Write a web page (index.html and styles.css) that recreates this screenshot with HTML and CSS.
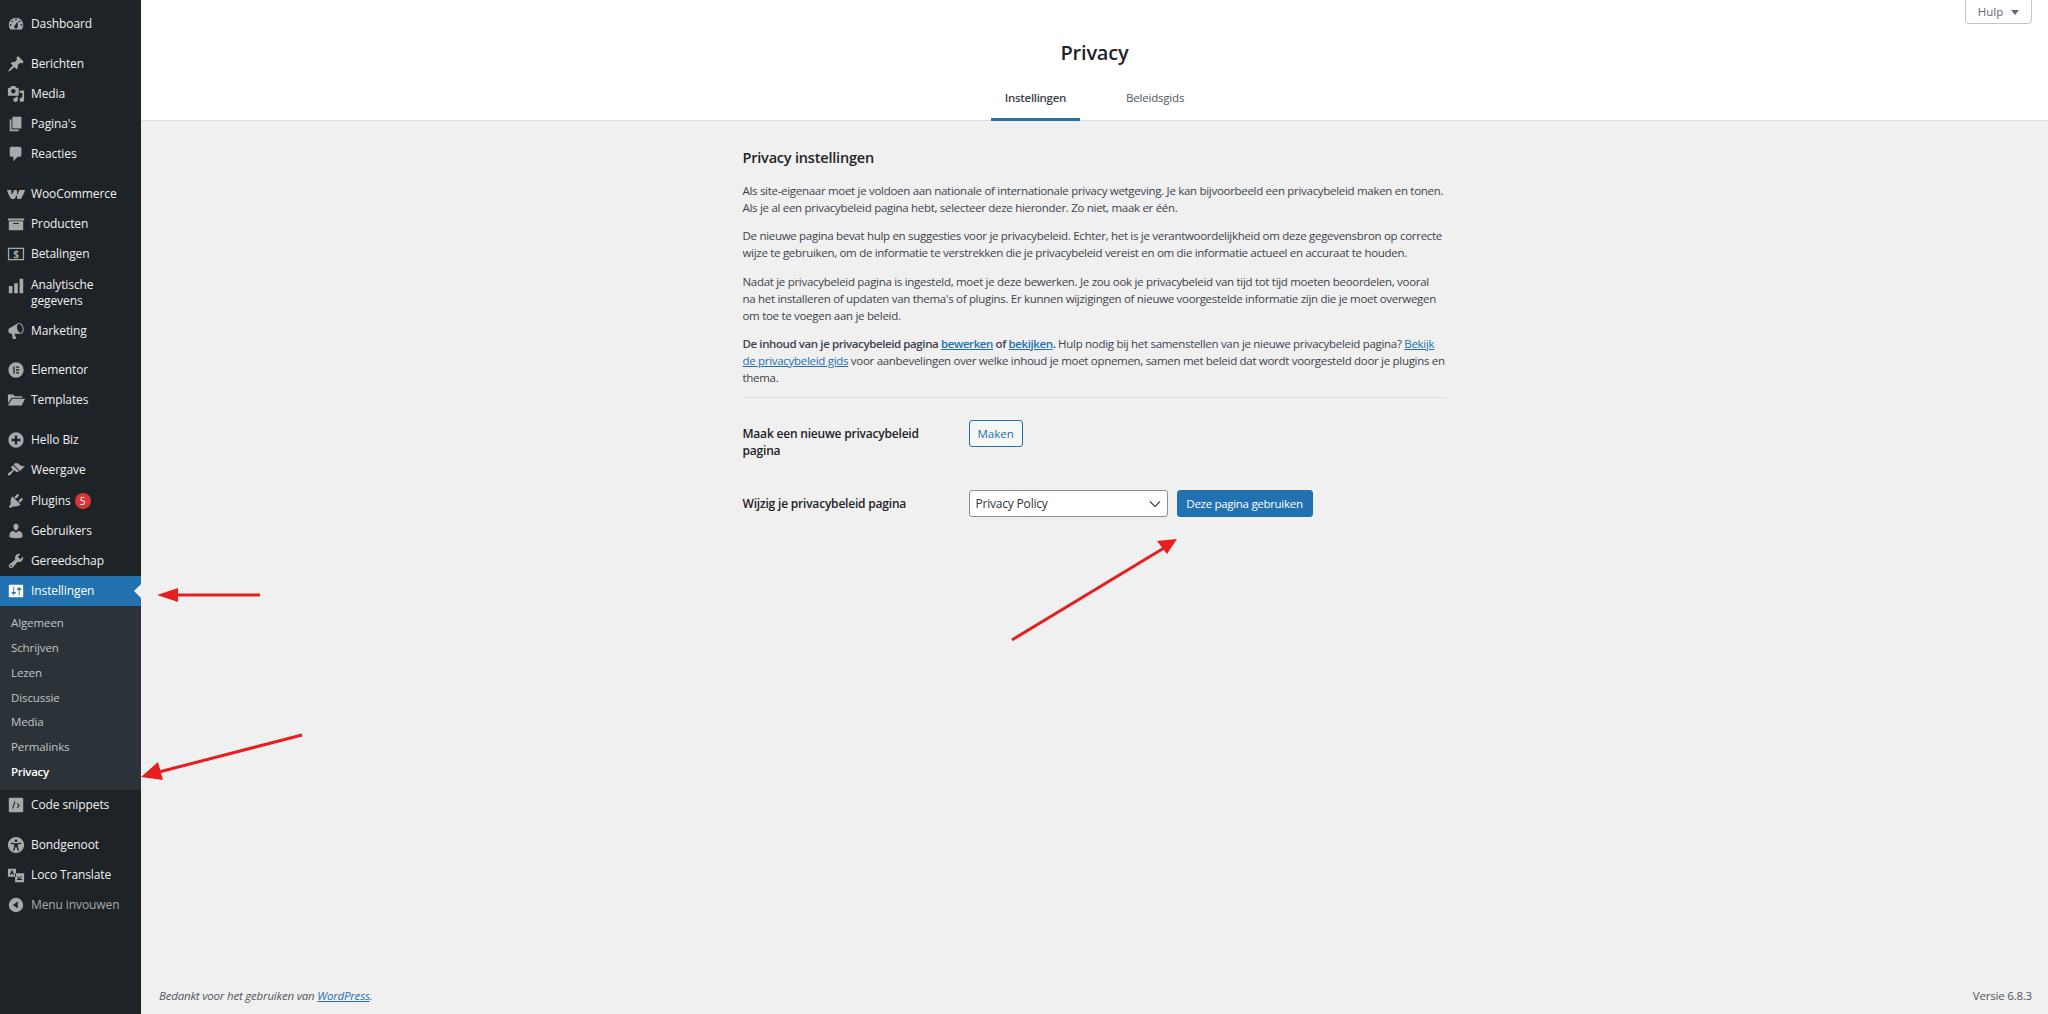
FILE: index.html
```html
<!DOCTYPE html>
<html lang="nl">

<head>
    <meta charset="UTF-8">
    <meta name="viewport" content="width=device-width, initial-scale=1.0">
    <title>Privacy instellingen</title>

    <!-- Custom style. -->
    <link rel="stylesheet" href="styles.css">
</head>

<body>
    <div class="page">
        <nav class="sidebar">
            <ul class="menu">
                <li class="item">
                    <svg class="icon" viewBox="0 0 20 20"><path d="M3.76 16h12.48c1.1-1.37 1.76-3.11 1.76-5 0-4.42-3.58-8-8-8s-8 3.58-8 8c0 1.89.66 3.63 1.76 5zM10 4c.55 0 1 .45 1 1s-.45 1-1 1-1-.45-1-1 .45-1 1-1zM6 6c.55 0 1 .45 1 1s-.45 1-1 1-1-.45-1-1 .45-1 1-1zm8 0c.55 0 1 .45 1 1s-.45 1-1 1-1-.45-1-1 .45-1 1-1zm-5.37 5.55L12 7v6c0 1.1-.9 2-2 2s-2-.9-2-2c0-.57.24-1.08.63-1.45zM4 10c.55 0 1 .45 1 1s-.45 1-1 1-1-.45-1-1 .45-1 1-1zm12 0c.55 0 1 .45 1 1s-.45 1-1 1-1-.45-1-1 .45-1 1-1z" /></svg>
                    Dashboard
                </li>
                <li class="sep"></li>
                <li class="item">
                    <svg class="icon" viewBox="0 0 20 20"><path d="M10.44 3.02l1.82-1.82 6.36 6.35-1.83 1.82c-1.05-.68-2.48-.57-3.41.36l-.75.75c-.92.93-1.04 2.35-.35 3.41l-1.83 1.82-2.41-2.41-2.8 2.79c-.42.42-3.38 2.71-3.8 2.29s1.86-3.39 2.28-3.81l2.79-2.79L4.1 9.36l1.83-1.82c1.05.69 2.48.57 3.4-.36l.75-.75c.93-.92 1.05-2.35.36-3.41z" /></svg>
                    Berichten
                </li>
                <li class="item">
                    <svg class="icon" viewBox="0 0 20 20"><path d="M13 11V4c0-.55-.45-1-1-1h-1.67L9 1H5L3.67 3H2c-.55 0-1 .45-1 1v7c0 .55.45 1 1 1h10c.55 0 1-.45 1-1zM7 4.5c1.38 0 2.5 1.12 2.5 2.5S8.38 9.5 7 9.5 4.5 8.38 4.5 7 5.62 4.5 7 4.5zM14 6h5v10.5c0 1.38-1.12 2.5-2.5 2.5S14 17.88 14 16.5s1.12-2.5 2.5-2.5c.17 0 .34.02.5.05V9h-3V6zm-4 8.05V13h2v3.5c0 1.38-1.12 2.5-2.5 2.5S7 17.88 7 16.5 8.12 14 9.5 14c.17 0 .34.02.5.05z" /></svg>
                    Media
                </li>
                <li class="item">
                    <svg class="icon" viewBox="0 0 20 20"><path d="M6 15V2h10v13H6zm-1 1h8v2H3V5h2v11z" /></svg>
                    Pagina's
                </li>
                <li class="item">
                    <svg class="icon" viewBox="0 0 20 20"><path d="M5 2h9c1.1 0 2 .9 2 2v7c0 1.1-.9 2-2 2h-2l-5 5v-5H5c-1.1 0-2-.9-2-2V4c0-1.1.9-2 2-2z" /></svg>
                    Reacties
                </li>
                <li class="sep"></li>
                <li class="item">
                    <svg class="icon icon-woo" viewBox="0 0 24 14"><path d="M0 1h5.500l.9 6.500L9.600 1h3.300l.9 6.500L16.500 1H24c-1.200 4.200-3.300 8.600-5.600 12h-4.500l-1-5.500L10 13H5.600C3.200 9.600 1 5.200 0 1z" /></svg>
                    WooCommerce
                </li>
                <li class="item">
                    <svg class="icon" viewBox="0 0 20 20"><path d="M19 4v2H1V4h18zM2 7h16v10H2V7zm11 3V9H7v1h6z" /></svg>
                    Producten
                </li>
                <li class="item">
                    <svg class="icon" viewBox="0 0 20 20"><path fill-rule="evenodd" d="M1 3h18v14H1V3zm1.4 1.4v11.2h15.200V4.400H2.400z" /><text class="dollar" x="10" y="14.300" text-anchor="middle">$</text></svg>
                    Betalingen
                </li>
                <li class="item item-tall">
                    <svg class="icon" viewBox="0 0 20 20"><path d="M18 18V2h-4v16h4zm-6 0V7H8v11h4zm-6 0v-8H2v8h4z" /></svg>
                    <span>Analytische<br>gegevens</span>
                </li>
                <li class="item">
                    <svg class="icon" viewBox="0 0 20 20"><path d="M18.15 5.94c.46 1.62.38 3.22-.02 4.48-.42 1.28-1.26 2.18-2.3 2.48-.16.06-.26.06-.4.06-.06.02-.12.02-.18.02-.06.02-.14.02-.22.02H8.23l2.22 5.5c.02.14-.06.26-.14.34-.08.1-.24.16-.34.16H6.95c-.1 0-.26-.06-.34-.16-.08-.08-.16-.2-.14-.34l-1-5.5H4.25l-.02-.02c-.5.06-1.08-.18-1.54-.62s-.88-1.08-1.06-1.88c-.24-.8-.2-1.56-.02-2.2.18-.62.58-1.08 1.06-1.3l.02-.02 9-5.4c.1-.06.18-.1.24-.16.06-.04.14-.08.24-.12.16-.08.28-.12.5-.18 1.04-.3 2.24.1 3.22.98s1.84 2.24 2.26 3.86zm-2.58 5.98h-.02c.4-.1.74-.34 1.04-.7.58-.7.86-1.76.86-3.04-.02-.64-.1-1.3-.28-1.98-.34-1.36-1.02-2.5-1.78-3.24s-1.68-1.1-2.46-.88c-.38.12-.7.34-.98.7-.6.7-.88 1.76-.88 3.04 0 .64.1 1.3.28 1.98.34 1.36 1.02 2.5 1.78 3.24.78.74 1.62 1.1 2.44.88z" /></svg>
                    Marketing
                </li>
                <li class="sep"></li>
                <li class="item">
                    <svg class="icon" viewBox="0 0 20 20"><path fill-rule="evenodd" d="M10 1.5a8.5 8.5 0 1 0 0 17 8.5 8.5 0 0 0 0-17zM7 6h1.500v8H7V6zm3 0h3.500v1.500H10V6zm0 3.250h3.500v1.500H10v-1.500zm0 3.250h3.500V14H10v-1.500z" /></svg>
                    Elementor
                </li>
                <li class="item">
                    <svg class="icon" viewBox="0 0 20 20"><path d="M1 4h6l1.500 1.800H17v1.700H5.200L1 13.500V4zm4.800 4.500H20l-3.600 7.500H1l4.800-7.500z" /></svg>
                    Templates
                </li>
                <li class="sep"></li>
                <li class="item">
                    <svg class="icon" viewBox="0 0 20 20"><path fill-rule="evenodd" d="M10 1.5a8.5 8.5 0 1 0 0 17 8.5 8.5 0 0 0 0-17zM8.700 5h2.600v3.700H15v2.600h-3.700V15H8.700v-3.700H5V8.700h3.700V5z" /></svg>
                    Hello Biz
                </li>
                <li class="item">
                    <svg class="icon" viewBox="0 0 20 20"><path d="M14.48 11.06L7.41 3.99l1.5-1.5c.5-.56 2.3-.47 3.51.32 1.21.8 1.43 1.28 2.91 2.1 1.18.64 2.45 1.26 4.45.85zm-.71.71L6.7 4.7 4.93 6.47c-.39.39-.39 1.02 0 1.41l1.06 1.06c.39.39.39 1.03 0 1.42-.6.6-1.43 1.11-2.21 1.69-.35.26-.7.53-1.01.84C1.43 13.23.4 14.89 1.2 15.8c.79.86 2.36-.3 3.68-1.62.3-.3.57-.65.84-1 .58-.78 1.1-1.61 1.69-2.21.39-.39 1.03-.39 1.42 0l1.06 1.06c.39.39 1.02.39 1.41 0z" /></svg>
                    Weergave
                </li>
                <li class="item">
                    <svg class="icon" viewBox="0 0 20 20"><path d="M13.11 4.36L9.87 7.6 8 5.73l3.24-3.24c.35-.34 1.05-.2 1.56.32.52.51.66 1.21.31 1.55zm-8 1.77l.91-1.12 9.01 9.01-1.19.84c-.71.71-2.63 1.16-3.82 1.16H6.14L4.9 17.26c-.59.59-1.54.59-2.12 0-.59-.58-.59-1.53 0-2.12l1.24-1.24v-3.88c0-1.13.4-3.19 1.09-3.89zm7.26 3.97l3.24-3.24c.34-.35 1.04-.21 1.55.31.52.51.66 1.21.31 1.55l-3.24 3.25z" /></svg>
                    Plugins <span class="badge">5</span>
                </li>
                <li class="item">
                    <svg class="icon" viewBox="0 0 20 20"><path d="M10 9.25c-2.27 0-2.73-3.44-2.73-3.44C7 4.02 7.82 2 9.97 2c2.16 0 2.98 2.02 2.71 3.81 0 0-.41 3.44-2.68 3.44zm0 2.57L12.72 10c2.39 0 4.52 2.33 4.52 4.53v2.49s-3.65 1.13-7.24 1.13c-3.65 0-7.24-1.13-7.24-1.13v-2.49c0-2.25 1.94-4.48 4.47-4.48z" /></svg>
                    Gebruikers
                </li>
                <li class="item">
                    <svg class="icon" viewBox="0 0 20 20"><path d="M16.68 9.77c-1.34 1.34-3.3 1.67-4.95.99l-5.41 6.52c-.99.99-2.59.99-3.58 0s-.99-2.59 0-3.57l6.52-5.42c-.68-1.65-.35-3.61.99-4.95 1.28-1.28 3.12-1.62 4.72-1.06l-2.89 2.89 2.82 2.82 2.86-2.87c.53 1.58.18 3.39-1.08 4.65zM3.81 16.21c.4.39 1.04.39 1.43 0 .4-.4.4-1.04 0-1.43-.39-.4-1.03-.4-1.43 0-.39.39-.39 1.03 0 1.43z" /></svg>
                    Gereedschap
                </li>
                <li class="item item-active">
                    <svg class="icon" viewBox="0 0 20 20"><path d="M18 16V4c0-.55-.45-1-1-1H3c-.55 0-1 .45-1 1v12c0 .55.45 1 1 1h14c.55 0 1-.45 1-1zM8 11h1c.55 0 1 .45 1 1s-.45 1-1 1H8v1.5c0 .28-.22.5-.5.5s-.5-.22-.5-.5V13H6c-.55 0-1-.45-1-1s.45-1 1-1h1V5.500c0-.28.22-.5.5-.5s.5.22.5.5V11zm5-2h-1c-.55 0-1-.45-1-1s.45-1 1-1h1V5.500c0-.28.22-.5.5-.5s.5.22.5.5V7h1c.55 0 1 .45 1 1s-.45 1-1 1h-1v5.500c0 .28-.22.5-.5.5s-.5-.22-.5-.5V9z" /></svg>
                    Instellingen
                </li>
                <li>
                    <ul class="submenu">
                        <li>Algemeen</li>
                        <li>Schrijven</li>
                        <li>Lezen</li>
                        <li>Discussie</li>
                        <li>Media</li>
                        <li>Permalinks</li>
                        <li class="current">Privacy</li>
                    </ul>
                </li>
                <li class="item">
                    <svg class="icon" viewBox="0 0 20 20"><path fill-rule="evenodd" d="M3 2h14a1 1 0 0 1 1 1v14a1 1 0 0 1-1 1H3a1 1 0 0 1-1-1V3a1 1 0 0 1 1-1zm5.300 4L5.700 14h1.200l2.600-8H8.300zm3.200 1.800l-.8.800 2.200 2.100-2.200 2.100.8.800 3-2.900-3-2.900z" /></svg>
                    Code snippets
                </li>
                <li class="sep"></li>
                <li class="item">
                    <svg class="icon" viewBox="0 0 20 20"><path fill-rule="evenodd" d="M10 1a9 9 0 1 0 0 18 9 9 0 0 0 0-18zm0 2.800a1.500 1.500 0 1 1 0 3 1.500 1.500 0 0 1 0-3zM4.500 7.300l4 .7h3l4-.7.300 1.200-3.800 1v2.500l1.500 4.200-1.200.4-1.700-4h-1.200l-1.700 4-1.200-.4L8 12V9.500l-3.800-1 .3-1.200z" /></svg>
                    Bondgenoot
                </li>
                <li class="item">
                    <svg class="icon" viewBox="0 0 20 20"><path fill-rule="evenodd" d="M1 3h9v9H1V3zm2.200 7L5 5h1.200l1.600 5H6.700l-.3-1H4.600l-.3 1H3.200zM9 8h10v10H9V8zm2 7.500h6v-1h-2.500l2-3-1-.5-1.800 2.600-1.700-2.600-1 .5 2 3H11v1z" /></svg>
                    Loco Translate
                </li>
                <li class="item item-collapse">
                    <svg class="icon" viewBox="0 0 20 20"><path fill-rule="evenodd" d="M10 2a8 8 0 1 0 0 16 8 8 0 0 0 0-16zm2 4v8L6.500 10 12 6z" /></svg>
                    Menu invouwen
                </li>
            </ul>
        </nav>

        <div class="main">
            <header class="head">
                <h1>Privacy</h1>
                <div class="tabs">
                    <span class="tab tab-active">Instellingen</span>
                    <span class="tab">Beleidsgids</span>
                </div>
                <button class="help">Hulp <span class="caret"></span></button>
            </header>

            <section class="body">
                <h2>Privacy instellingen</h2>
                <p>Als site-eigenaar moet je voldoen aan nationale of internationale privacy wetgeving. Je kan bijvoorbeeld een privacybeleid maken en tonen.<br>Als je al een privacybeleid pagina hebt, selecteer deze hieronder. Zo niet, maak er één.</p>
                <p>De nieuwe pagina bevat hulp en suggesties voor je privacybeleid. Echter, het is je verantwoordelijkheid om deze gegevensbron op correcte<br>wijze te gebruiken, om de informatie te verstrekken die je privacybeleid vereist en om die informatie actueel en accuraat te houden.</p>
                <p>Nadat je privacybeleid pagina is ingesteld, moet je deze bewerken. Je zou ook je privacybeleid van tijd tot tijd moeten beoordelen, vooral<br>na het installeren of updaten van thema's of plugins. Er kunnen wijzigingen of nieuwe voorgestelde informatie zijn die je moet overwegen<br>om toe te voegen aan je beleid.</p>
                <p><strong>De inhoud van je privacybeleid pagina <a>bewerken</a> of <a>bekijken</a>.</strong> Hulp nodig bij het samenstellen van je nieuwe privacybeleid pagina? <a>Bekijk<br>de privacybeleid gids</a> voor aanbevelingen over welke inhoud je moet opnemen, samen met beleid dat wordt voorgesteld door je plugins en<br>thema.</p>
                <hr>
                <div class="row row-first">
                    <label>Maak een nieuwe privacybeleid pagina</label>
                    <button class="btn">Maken</button>
                </div>
                <div class="row">
                    <label>Wijzig je privacybeleid pagina</label>
                    <div class="select">
                        Privacy Policy
                        <svg class="chevron" viewBox="0 0 12 8"><path d="M1 1.5l5 5 5-5" /></svg>
                    </div>
                    <button class="btn btn-primary">Deze pagina gebruiken</button>
                </div>
            </section>

            <footer class="foot">
                <span class="thanks">Bedankt voor het gebruiken van <a>WordPress</a>.</span>
                <span>Versie 6.8.3</span>
            </footer>
        </div>
    </div>

    <!-- Annotation arrows on top of the screenshot. -->
    <svg class="arrows" viewBox="0 0 2048 1014">
        <line x1="260" y1="595" x2="172" y2="595" />
        <polygon points="157,595 178,588 178,602" />
        <line x1="302" y1="735" x2="155" y2="773" />
        <polygon points="141,777 158,762 163,780" />
        <line x1="1012" y1="640" x2="1164" y2="548" />
        <polygon points="1177,539 1167,554 1157,541" />
    </svg>
</body>

</html>
```

FILE: styles.css
```css
* {
    box-sizing: border-box;
}

body {
    margin: 0;
    font-family: "Open Sans", "Noto Sans", sans-serif;
    font-size: 12px;
    letter-spacing: -0.2px;
    color: #3c434a;
    background-color: #f0f0f1;
}

.page {
    display: flex;
    height: 100vh;
    overflow: hidden;
}

/* Sidebar */

.sidebar {
    width: 141px;
    flex-shrink: 0;
    background-color: #1d2327;
    padding-top: 9px;
    letter-spacing: -0.1px;
}

.menu,
.submenu {
    list-style: none;
    margin: 0;
    padding: 0;
}

.item {
    height: 30.2px;
    display: flex;
    align-items: center;
    gap: 6px;
    padding-left: 7px;
    color: #f0f0f1;
    line-height: 16px;
}

.item-tall {
    height: 46px;
    align-items: flex-start;
    padding-top: 7px;
}

.sep {
    height: 9.5px;
}

.icon {
    width: 18px;
    height: 18px;
    flex-shrink: 0;
    fill: #a7aaad;
}

.icon-woo {
    height: 11px;
}

.dollar {
    font-size: 11px;
    font-weight: bold;
    fill: #a7aaad;
}

.item-active {
    position: relative;
    background-color: #2271b1;
    color: white;
}

.item-active .icon {
    fill: white;
}

.item-active::after {
    content: "";
    position: absolute;
    right: 0;
    top: 8px;
    border: 7px solid transparent;
    border-left-width: 0;
    border-right-color: #f0f0f1;
}

.item-collapse {
    color: #a7aaad;
}

.badge {
    width: 16px;
    height: 16px;
    margin-left: -2px;
    display: flex;
    justify-content: center;
    align-items: center;
    border-radius: 50%;
    font-size: 10px;
    color: white;
    background-color: #d63638;
}

.submenu {
    background-color: #2c3338;
    padding: 4px 0 6px;
}

.submenu li {
    height: 24.85px;
    display: flex;
    align-items: center;
    padding-left: 11px;
    font-size: 11.5px;
    color: #c3c4c7;
}

.submenu .current {
    font-weight: 600;
    letter-spacing: -0.3px;
    color: white;
}

/* Main */

.main {
    flex-grow: 1;
    display: flex;
    flex-direction: column;
    min-width: 0;
}

.head {
    position: relative;
    height: 121px;
    display: flex;
    flex-direction: column;
    align-items: center;
    background-color: white;
    border-bottom: 1px solid #dcdcde;
}

h1 {
    margin: 39px 0 0;
    font-size: 20px;
    line-height: 28px;
    font-weight: 600;
    color: #1d2327;
}

.tabs {
    display: flex;
    gap: 32px;
    margin-top: 17px;
}

.tab {
    height: 37px;
    padding: 6px 14px 0;
    font-size: 11.5px;
    line-height: 16px;
    color: #50575e;
}

.tab-active {
    font-weight: 600;
    letter-spacing: -0.3px;
    color: #3c434a;
    border-bottom: 3px solid #2271b1;
}

.help {
    position: absolute;
    top: -1px;
    right: 16px;
    width: 67px;
    height: 25px;
    font: inherit;
    font-size: 11.5px;
    color: #646970;
    background-color: white;
    border: 1px solid #c3c4c7;
    border-radius: 0 0 4px 4px;
}

.caret {
    display: inline-block;
    margin-left: 5px;
    vertical-align: 1px;
    border: 4px solid transparent;
    border-top: 5px solid #646970;
    border-bottom-width: 0;
}

.body {
    width: 704px;
    margin: 0 auto;
    padding-top: 26px;
}

h2 {
    margin: 0 0 13px;
    font-size: 14.5px;
    line-height: 22px;
    font-weight: 600;
    color: #1d2327;
}

p {
    margin: 0 0 11.3px;
    font-size: 11.5px;
    line-height: 17px;
    letter-spacing: -0.3px;
    white-space: nowrap;
}

strong {
    font-weight: 600;
    letter-spacing: -0.4px;
}

a {
    color: #2271b1;
    text-decoration: underline;
}

hr {
    margin: 0;
    border: 0;
    border-top: 1px solid #dcdcde;
}

.row {
    display: flex;
    align-items: center;
    gap: 9px;
    margin-top: 31px;
}

.row-first {
    align-items: flex-start;
    margin-top: 22px;
}

label {
    width: 217px;
    padding-right: 30px;
    font-size: 12px;
    line-height: 17px;
    font-weight: 600;
    color: #1d2327;
}

.row-first label {
    padding-top: 5px;
}

.btn {
    height: 27px;
    padding: 0 8px;
    font: inherit;
    font-size: 11.5px;
    color: #2271b1;
    background-color: #f6f7f7;
    border: 1px solid #2271b1;
    border-radius: 3px;
}

.btn-primary {
    width: 136px;
    padding: 0;
    letter-spacing: -0.3px;
    color: white;
    background-color: #2271b1;
}

.select {
    width: 199px;
    height: 27px;
    display: flex;
    justify-content: space-between;
    align-items: center;
    padding: 0 6px;
    font-size: 12px;
    color: #2c3338;
    background-color: white;
    border: 1px solid #8c8f94;
    border-radius: 3px;
}

.chevron {
    width: 12px;
    height: 8px;
    fill: none;
    stroke: #50575e;
    stroke-width: 1.5;
}

.foot {
    margin-top: auto;
    display: flex;
    justify-content: space-between;
    padding: 0 16px 10px 18px;
    font-size: 11.5px;
    line-height: 16px;
    color: #50575e;
}

.thanks {
    font-style: italic;
}

/* Arrows */

.arrows {
    position: absolute;
    left: 0;
    top: 0;
    width: 2048px;
    height: 1014px;
    pointer-events: none;
}

.arrows line {
    stroke: #e61e1e;
    stroke-width: 3;
}

.arrows polygon {
    fill: #e61e1e;
}
```
